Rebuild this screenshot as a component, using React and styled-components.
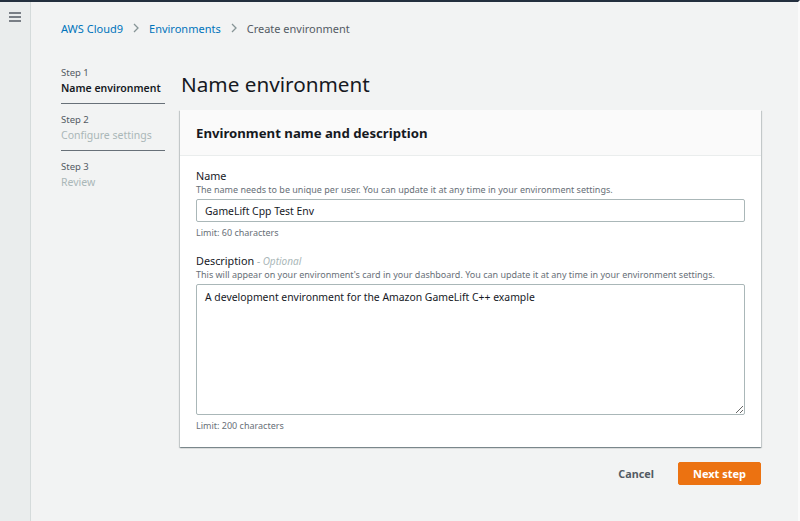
import React from 'react';
import styled, { createGlobalStyle } from 'styled-components';

const GlobalStyle = createGlobalStyle`
  html, body {
    margin: 0;
    padding: 0;
    background: #f2f3f3;
    font-family: "Noto Sans", "Open Sans", Arial, sans-serif;
    color: #16191f;
  }
  * { box-sizing: border-box; }
`;

const Page = styled.div`
  display: flex;
  min-height: 521px;
  border-top: 2px solid #232f3e;
  border-right: 2px solid #fafafa;
`;

const SideRail = styled.div`
  width: 31px;
  flex-shrink: 0;
  background: #eaeded;
  border-right: 1px solid #d5dbdb;
  display: flex;
  justify-content: center;
  padding-top: 10px;
`;

const Main = styled.main`
  flex: 1;
  padding: 0 0 0 30px;
`;

const Breadcrumbs = styled.nav`
  display: flex;
  align-items: center;
  height: 52px;
  font-size: 11px;
  gap: 9px;
`;

const Crumb = styled.span`
  color: ${(p) => (p.$current ? '#545b64' : '#0073bb')};
`;

const Chevron = styled.svg`
  width: 8px;
  height: 10px;
  stroke: #879596;
  fill: none;
  stroke-width: 1.3;
`;

const Layout = styled.div`
  display: flex;
  gap: 15px;
  padding-top: 10px;
`;

const Steps = styled.ol`
  list-style: none;
  margin: 0;
  padding: 0;
  width: 104px;
  flex-shrink: 0;
`;

const Step = styled.li`
  padding: 2px 0 6px;
  margin-bottom: 7px;
  border-bottom: ${(p) => (p.$last ? 'none' : '1px solid #687078')};
`;

const StepNo = styled.div`
  font-size: 9.5px;
  color: #545b64;
  line-height: 14px;
`;

const StepName = styled.div`
  font-size: 10.5px;
  line-height: 17px;
  font-weight: ${(p) => (p.$active ? 600 : 400)};
  color: ${(p) => (p.$active ? '#16191f' : '#aab7b8')};
  white-space: nowrap;
`;

const Content = styled.div`
  width: 581px;
`;

const Title = styled.h1`
  margin: 2px 0 0 1px;
  font-size: 20.7px;
  font-weight: 400;
  line-height: 36px;
  color: #16191f;
`;

const Card = styled.section`
  margin-top: 8px;
  background: #fff;
  box-shadow: 0 1px 1px 0 rgba(0, 28, 36, 0.3), 1px 1px 1px 0 rgba(0, 28, 36, 0.15), -1px 1px 1px 0 rgba(0, 28, 36, 0.15);
`;

const CardHeader = styled.header`
  background: #fafafa;
  border-bottom: 1px solid #eaeded;
  height: 46px;
  display: flex;
  align-items: center;
  padding: 0 16px;
`;

const CardTitle = styled.h2`
  margin: 0;
  font-size: 13.2px;
  font-weight: 700;
  color: #16191f;
`;

const CardBody = styled.div`
  padding: 12px 16px 15px;
`;

const Field = styled.div`
  margin-bottom: ${(p) => (p.$last ? '0' : '14px')};
`;

const Label = styled.label`
  display: block;
  font-size: 10.8px;
  line-height: 16px;
  color: #16191f;
`;

const Optional = styled.i`
  color: #aab7b8;
  font-size: 10px;
`;

const Hint = styled.div`
  font-size: 9px;
  line-height: 12px;
  color: #687078;
`;

const Constraint = styled(Hint)`
  margin-top: 5px;
`;

const inputBase = `
  display: block;
  width: 100%;
  border: 1px solid #aab7b8;
  border-radius: 2px;
  font-family: "Noto Sans", "Open Sans", Arial, sans-serif;
  font-size: 10.4px;
  color: #16191f;
  background: #fff;
  padding: 0 8px;
  outline: none;
`;

const TextInput = styled.input`
  ${inputBase}
  margin-top: 3px;
  height: 23px;
`;

const TextArea = styled.textarea`
  ${inputBase}
  margin-top: 3px;
  height: 131px;
  padding-top: 4px;
  line-height: 16px;
  resize: vertical;
`;

const Actions = styled.div`
  display: flex;
  justify-content: flex-end;
  align-items: center;
  gap: 24px;
  margin-top: 15px;
`;

const LinkButton = styled.button`
  background: none;
  border: none;
  font-family: inherit;
  font-size: 10.8px;
  font-weight: 700;
  color: #545b64;
  padding: 0;
  cursor: pointer;
`;

const PrimaryButton = styled.button`
  background: #ec7211;
  border: 1px solid #ec7211;
  border-radius: 2px;
  color: #fff;
  font-family: inherit;
  font-size: 11px;
  font-weight: 700;
  width: 83px;
  height: 23px;
  cursor: pointer;
`;

const ChevronIcon = () => (
  <Chevron viewBox="0 0 8 10">
    <path d="M2 1l4 4-4 4" />
  </Chevron>
);

const Hamburger = () => (
  <svg width="12" height="10" viewBox="0 0 12 10" fill="none" stroke="#545b64" strokeWidth="1.3">
    <path d="M0 1h12M0 5h12M0 9h12" />
  </svg>
);

export default function App() {
  return (
    <>
      <GlobalStyle />
      <Page>
        <SideRail>
          <Hamburger />
        </SideRail>
        <Main>
          <Breadcrumbs>
            <Crumb>AWS Cloud9</Crumb>
            <ChevronIcon />
            <Crumb>Environments</Crumb>
            <ChevronIcon />
            <Crumb $current>Create environment</Crumb>
          </Breadcrumbs>
          <Layout>
            <Steps>
              <Step>
                <StepNo>Step 1</StepNo>
                <StepName $active>Name environment</StepName>
              </Step>
              <Step>
                <StepNo>Step 2</StepNo>
                <StepName>Configure settings</StepName>
              </Step>
              <Step $last>
                <StepNo>Step 3</StepNo>
                <StepName>Review</StepName>
              </Step>
            </Steps>
            <Content>
              <Title>Name environment</Title>
              <Card>
                <CardHeader>
                  <CardTitle>Environment name and description</CardTitle>
                </CardHeader>
                <CardBody>
                  <Field>
                    <Label>Name</Label>
                    <Hint>The name needs to be unique per user. You can update it at any time in your environment settings.</Hint>
                    <TextInput defaultValue="GameLift Cpp Test Env" />
                    <Constraint>Limit: 60 characters</Constraint>
                  </Field>
                  <Field $last>
                    <Label>
                      Description <Optional>- Optional</Optional>
                    </Label>
                    <Hint>This will appear on your environment's card in your dashboard. You can update it at any time in your environment settings.</Hint>
                    <TextArea defaultValue="A development environment for the Amazon GameLift C++ example" />
                    <Constraint>Limit: 200 characters</Constraint>
                  </Field>
                </CardBody>
              </Card>
              <Actions>
                <LinkButton>Cancel</LinkButton>
                <PrimaryButton>Next step</PrimaryButton>
              </Actions>
            </Content>
          </Layout>
        </Main>
      </Page>
    </>
  );
}
